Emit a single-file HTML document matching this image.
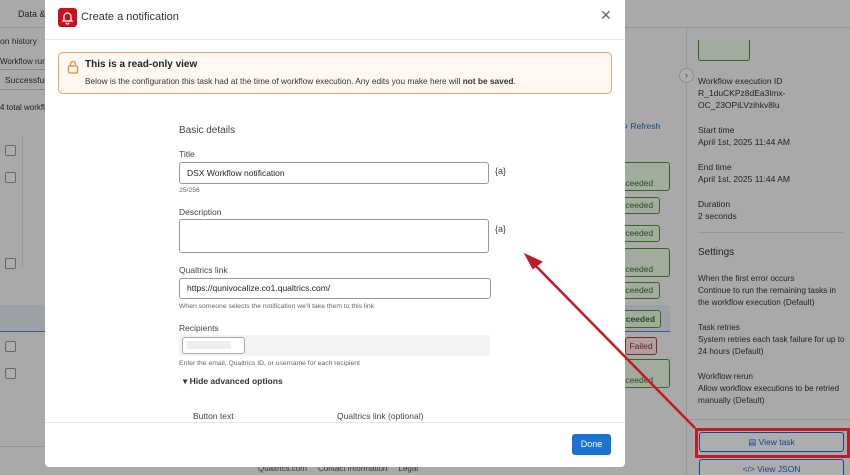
<!DOCTYPE html>
<html><head><style>
html,body{margin:0;width:850px;height:475px;overflow:hidden;background:#fafafa}
body{font-family:"Liberation Sans",sans-serif;position:relative;color:#333}
.a{position:absolute}
.t{font-size:8.5px;color:#333;white-space:nowrap}
.succ{position:absolute;border:1px solid #4f9a3a;background:#f0fbe9;color:#2e7a22;font-size:8.5px;border-radius:3px}
.cb{position:absolute;width:9px;height:9px;border:1px solid #999;border-radius:2px;left:5px;background:#fff}
.lbl{position:absolute;left:179px;font-size:8.5px;color:#444}
.box{position:absolute;left:179px;width:308px;border:1px solid #999;border-radius:3px;background:#fff;font-size:8.5px;color:#222}
.help{position:absolute;left:179px;font-size:6.8px;color:#666;white-space:nowrap}
</style></head><body>
<div class="a" style="left:0;top:0;width:850px;height:475px;background:#fafafa"></div>
<div class="a t" style="left:18px;top:9px;font-size:9px">Data &amp;</div>
<div class="a" style="left:0;top:27px;width:850px;height:1px;background:#ddd"></div>
<div class="a t" style="left:0;top:36px">on history</div>
<div class="a t" style="left:0;top:57px;font-size:8px">Workflow run</div>
<div class="a" style="left:0;top:69px;width:45px;height:1px;background:#ccc"></div>
<div class="a t" style="left:5px;top:75px;font-size:8.5px">Successful</div>
<div class="a" style="left:0;top:89px;width:45px;height:1px;background:#ccc"></div>
<div class="a t" style="left:0;top:103px;font-size:8px">4 total workfl</div>
<div class="a" style="left:22px;top:137px;width:1px;height:130px;background:#ddd"></div>
<div class="cb" style="top:145px"></div><div class="cb" style="top:172px"></div><div class="cb" style="top:258px"></div><div class="cb" style="top:341px"></div><div class="cb" style="top:368px"></div>
<div class="a" style="left:0;top:305px;width:45px;height:26px;background:#e6ecf6"></div>
<div class="a" style="left:0;top:331px;width:45px;height:1px;background:#4a85d0"></div>
<div class="a" style="left:0;top:446px;width:45px;height:1px;background:#ddd"></div>
<div class="a t" style="left:258px;top:464px;font-size:8px;color:#555">Qualtrics.com &nbsp; &nbsp; Contact information &nbsp; &nbsp; Legal</div>
<div class="a" style="left:686px;top:27px;width:1px;height:448px;background:#ddd"></div>
<div class="a" style="left:698px;top:40px;width:50px;height:20px;border:1px solid #4f9a3a;border-top:none;border-radius:0 0 3px 3px;background:#f0fbe9"></div>
<div class="a" style="left:679px;top:68px;width:13px;height:13px;border:1px solid #ccc;border-radius:50%;font-size:9px;text-align:center;line-height:13px;color:#555;background:#fff">›</div>
<div class="a" style="left:621px;top:121px;color:#1a6ad0;font-size:8.5px">↻ Refresh</div>
<div class="succ" style="left:620px;top:162px;width:48px;height:27px;line-height:40px">cceeded</div>
<div class="succ" style="left:620px;top:197px;width:38px;height:15px;line-height:15px">cceeded</div>
<div class="succ" style="left:620px;top:225px;width:38px;height:15px;line-height:15px">cceeded</div>
<div class="succ" style="left:620px;top:248px;width:48px;height:27px;line-height:40px">cceeded</div>
<div class="succ" style="left:620px;top:282px;width:38px;height:15px;line-height:15px">cceeded</div>
<div class="a" style="left:625px;top:305px;width:45px;height:26px;background:#e6ecf6"></div>
<div class="succ" style="left:620px;top:310px;width:39px;height:16px;line-height:16px;font-weight:bold">cceeded</div>
<div class="a" style="left:625px;top:331px;width:45px;height:1px;background:#4a85d0"></div>
<div class="a" style="left:625px;top:337px;width:30px;height:16px;border:1px solid #c03a3a;border-radius:3px;color:#b82020;background:#fdeeee;font-size:8.5px;line-height:16px;text-align:center">Failed</div>
<div class="succ" style="left:620px;top:359px;width:48px;height:27px;line-height:40px">cceeded</div>
<div class="a t" style="left:698px;top:75px;line-height:12px">Workflow execution ID<br>R_1duCKPz8dEa3lmx-<br>OC_23OPiLVzihkv8lu</div>
<div class="a t" style="left:698px;top:124px;line-height:12px">Start time<br>April 1st, 2025 11:44 AM</div>
<div class="a t" style="left:698px;top:161px;line-height:12px">End time<br>April 1st, 2025 11:44 AM</div>
<div class="a t" style="left:698px;top:198px;line-height:12px">Duration<br>2 seconds</div>
<div class="a" style="left:698px;top:232px;width:145px;height:1px;background:#ddd"></div>
<div class="a t" style="left:698px;top:247px;font-size:10px">Settings</div>
<div class="a t" style="left:698px;top:273px;line-height:12px;font-size:8.2px">When the first error occurs<br>Continue to run the remaining tasks in<br>the workflow execution (Default)</div>
<div class="a t" style="left:698px;top:322px;line-height:12px;font-size:8.2px">Task retries<br>System retries each task failure for up to<br>24 hours (Default)</div>
<div class="a t" style="left:698px;top:371px;line-height:12px;font-size:8.2px">Workflow rerun<br>Allow workflow executions to be retried<br>manually (Default)</div>
<div class="a" style="left:686px;top:419px;width:164px;height:1px;background:#ddd"></div>
<div class="a" style="left:699px;top:432px;width:143px;height:18px;border:1px solid #1a6ad0;border-radius:3px;color:#1a6ad0;background:#fff;font-size:8.5px;text-align:center;line-height:18px">▤ View task</div>
<div class="a" style="left:699px;top:459px;width:143px;height:18px;border:1px solid #1a6ad0;border-radius:3px;color:#1a6ad0;background:#fff;font-size:8.5px;text-align:center;line-height:18px">&lt;/&gt; View JSON</div>
<!-- dim overlay -->
<div class="a" style="left:0;top:0;width:850px;height:475px;background:rgba(0,0,0,0.32)"></div>
<div class="a" style="left:695px;top:428px;width:149px;height:24px;border:3px solid #c41a28"></div>
<div class="a" style="left:45px;top:0;width:580px;height:467px;background:#fff;border-radius:0 0 4px 4px">
 <div class="a" style="left:13px;top:8px;width:19px;height:19px;background:#c8101e;border-radius:3px">
  <svg width="19" height="19" viewBox="0 0 19 19"><path d="M6 12V8.5a3.5 3.5 0 0 1 7 0V12l1 1H5z M8 14.5a1.5 1.5 0 0 0 3 0" fill="none" stroke="#fff" stroke-width="1.2"/></svg>
 </div>
 <div class="a" style="left:36px;top:11px;font-size:11px;color:#333">Create a notification</div>
 <div class="a" style="left:555px;top:7px;font-size:14px;color:#666">✕</div>
 <div class="a" style="left:0;top:39px;width:580px;height:1px;background:#e8e8e8"></div>
 <div class="a" style="left:13px;top:52px;width:552px;height:40px;border:1px solid #f0a060;border-radius:5px;background:#fff8f2">
  <svg class="a" style="left:8px;top:7px" width="12" height="14" viewBox="0 0 12 14"><rect x="1.5" y="6" width="9" height="7" rx="1" fill="none" stroke="#e08a30" stroke-width="1.2"/><path d="M3.5 6V4a2.5 2.5 0 0 1 5 0v2" fill="none" stroke="#e08a30" stroke-width="1.2"/></svg>
  <div class="a" style="left:26px;top:6px;font-size:10px;font-weight:bold;color:#222">This is a read-only view</div>
  <div class="a" style="left:26px;top:23px;font-size:8.3px;color:#333;white-space:nowrap">Below is the configuration this task had at the time of workflow execution. Any edits you make here will <b>not be saved</b>.</div>
 </div>
 <div class="a" style="left:0;top:422px;width:580px;height:1px;background:#e8e8e8"></div>
 <div class="a" style="left:527px;top:434px;width:39px;height:21px;background:#1a73d0;border-radius:3px;color:#fff;font-size:9px;text-align:center;line-height:21px">Done</div>
</div>
<div class="a" style="left:179px;top:125px;font-size:10px;color:#444">Basic details</div>
<div class="lbl" style="top:149px">Title</div>
<div class="box" style="top:162px;height:20px;line-height:20px;text-indent:7px">DSX Workflow notification</div>
<div class="a" style="left:495px;top:166px;font-size:9px;color:#444">{a}</div>
<div class="help" style="top:187px">25/256</div>
<div class="lbl" style="top:207px">Description</div>
<div class="box" style="top:219px;height:32px"></div>
<div class="a" style="left:495px;top:224px;font-size:9px;color:#444">{a}</div>
<div class="lbl" style="top:265px">Qualtrics link</div>
<div class="box" style="top:278px;width:310px;height:19px;line-height:19px;text-indent:7px">https://qunivocalize.co1.qualtrics.com/</div>
<div class="help" style="top:303px">When someone selects the notification we'll take them to this link</div>
<div class="lbl" style="top:323px">Recipients</div>
<div class="a" style="left:179px;top:335px;width:311px;height:21px;background:#f3f3f3;border-radius:3px"></div>
<div class="a" style="left:182px;top:337px;width:61px;height:15px;border:1px solid #aaa;border-radius:3px;background:#fff"><div style="margin:3px 4px;width:44px;height:8px;background:#eee"></div></div>
<div class="help" style="top:360px">Enter the email, Qualtrics ID, or username for each recipient</div>
<div class="a" style="left:183px;top:376px;font-size:8.5px;font-weight:bold;color:#333">▾ Hide advanced options</div>
<div class="a" style="left:193px;top:411px;font-size:8.5px;color:#444">Button text</div>
<div class="a" style="left:337px;top:411px;font-size:8.5px;color:#444">Qualtrics link (optional)</div>
<svg class="a" style="left:0;top:0" width="850" height="475"><line x1="695" y1="428" x2="532" y2="262" stroke="#c41a28" stroke-width="2.5"/><path d="M526 255 L541 262 L533 268 Z" fill="#c41a28" stroke="#c41a28" stroke-width="2"/></svg>
</body></html>
